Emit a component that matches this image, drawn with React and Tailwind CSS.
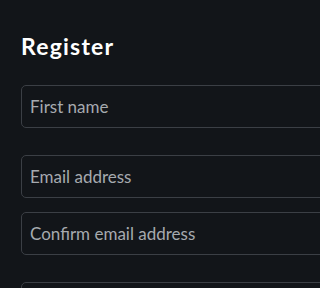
export default function App() {
  const field =
    "h-[43px] w-full shrink-0 rounded-[5px] border border-[#3b3f45] bg-[#121519] px-[8px] text-[17px] text-[#a6aaaf] flex items-center";
  return (
    <div
      className="fixed inset-0 overflow-hidden bg-[#121519]"
      style={{ fontFamily: "Lato, 'Noto Sans', sans-serif" }}
    >
      <div className="w-[420px] pl-[21px] pt-[31px]">
        <h1 className="text-[23px] font-bold leading-[30px] tracking-[1.2px] text-white">Register</h1>
        <div className="mt-[24px] flex flex-col">
          <div className={field}>First name</div>
          <div className={`${field} mt-[27px]`}>Email address</div>
          <div className={`${field} mt-[14px]`}>Confirm email address</div>
          {/* next field starts just at the bottom edge */}
          <div className={`${field} mt-[27px]`} />
        </div>
      </div>
    </div>
  );
}
